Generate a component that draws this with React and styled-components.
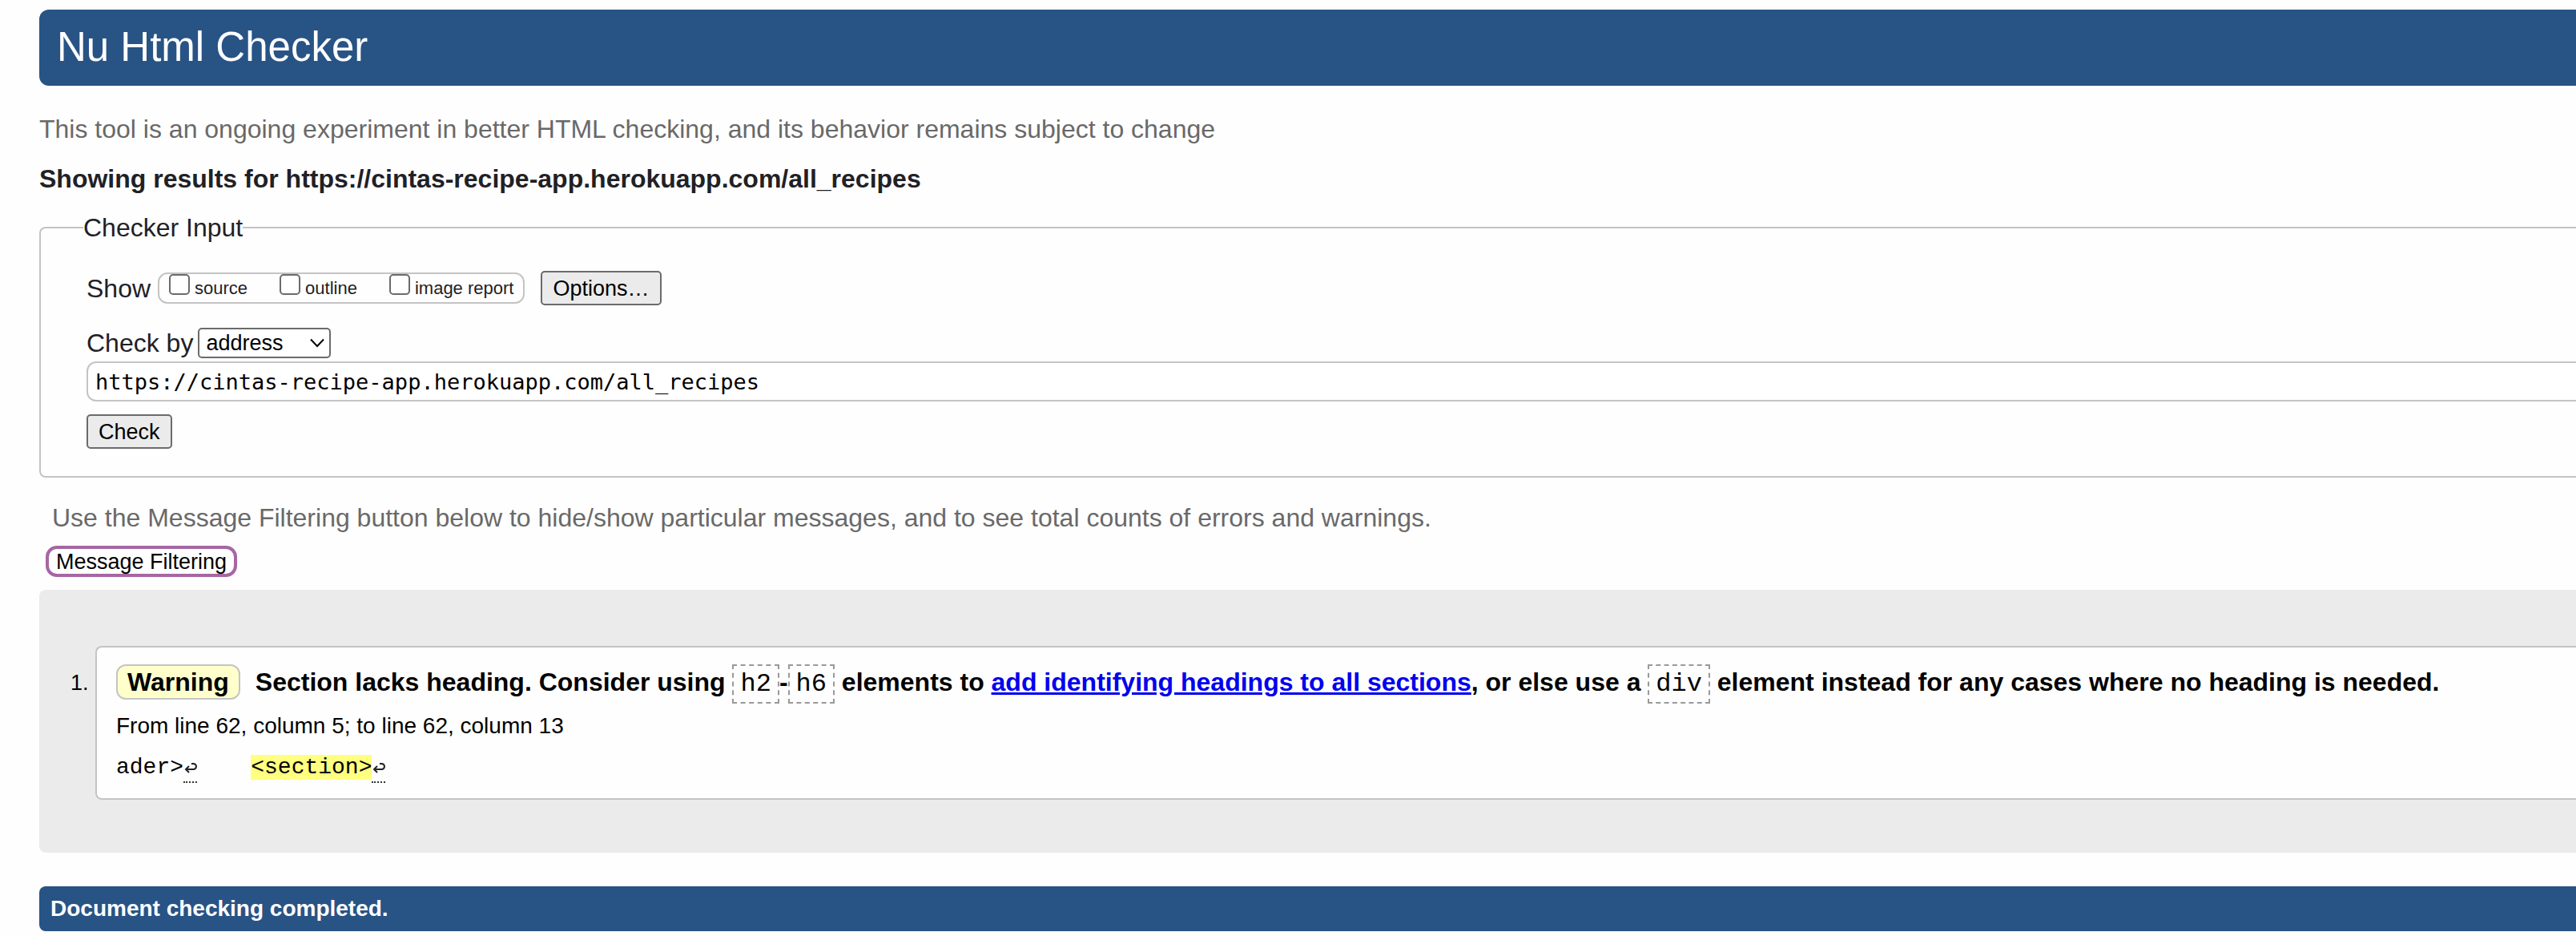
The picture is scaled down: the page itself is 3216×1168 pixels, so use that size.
import React from "react";
import styled, { createGlobalStyle } from "styled-components";

const sans = `"Liberation Sans", Arial, sans-serif`;
const mono = `"Liberation Mono", "Courier New", monospace`;
const grey = "#c4c4c4";
const navy = "#285385";

const GlobalStyle = createGlobalStyle`
  *, *::before, *::after { box-sizing: border-box; }
  body {
    margin: 0;
    background: #fefefe;
    color: #1f2126;
    font: 32px/36px ${sans};
  }
`;

const Page = styled.div`
  padding: 12px 0 6px 49px;
`;

const Banner = styled.h1`
  margin: 0;
  padding: 17px 22px 18px;
  border-radius: 12px 0 0 12px;
  background: ${navy};
  color: #fff;
  font-size: 51px;
  line-height: 60px;
  font-weight: 400;
`;

const Note = styled.p`
  margin: 0;
  padding: ${(p) => (p.$inset ? "32px 16px 0" : "36px 0 0")};
  color: #696969;
`;

const Results = styled.h2`
  margin: 26px 0 0;
  font-size: 32px;
`;

const Panel = styled.fieldset`
  margin: 25px 0 0;
  padding: 36px 0 34px 57px;
  border: 2px solid ${grey};
  border-right: 0;
  border-radius: 8px 0 0 8px;
`;

const Legend = styled.legend`
  margin-left: -4px;
  padding: 0;
`;

const Row = styled.div`
  display: flex;
  align-items: center;
  margin-bottom: ${(p) => p.$gap}px;
`;

const Options = styled.div`
  display: flex;
  gap: 40px;
  height: 39px;
  margin: 0 20px 0 9px;
  padding: 0 12px;
  border: 2px solid ${grey};
  border-radius: 12px;
`;

const Option = styled.label`
  display: flex;
  gap: 6px;
  font-size: 22px;
  line-height: 36px;
`;

const Tick = styled.input`
  appearance: none;
  width: 26px;
  height: 26px;
  margin: 0;
  border: 2px solid #6b6b6b;
  border-radius: 5px;
  background: #fff;
`;

const Button = styled.button`
  height: 43px;
  padding: 0 13px;
  border: 2px solid #6b6b6b;
  border-radius: 5px;
  background: #ebebeb;
  color: #000;
  font: 27px/34px ${sans};
`;

const SelectBox = styled.span`
  display: grid;
  align-items: center;
  width: 166px;
  height: 38px;
  margin-left: 6px;
  > * { grid-area: 1 / 1; }
  > svg { justify-self: end; margin-right: 8px; pointer-events: none; }
`;

const Select = styled.select`
  appearance: none;
  width: 100%;
  height: 100%;
  padding: 0 8px;
  border: 2px solid #6b6b6b;
  border-radius: 5px;
  background: #fff;
  color: #000;
  font: 27px/32px ${sans};
`;

const Address = styled.input`
  display: block;
  width: 100%;
  height: 50px;
  margin-bottom: 16px;
  padding: 0 9px;
  border: 2px solid ${grey};
  border-right: 0;
  border-radius: 12px 0 0 12px;
  background: #fff;
  color: #000;
  font: 27px/36px "DejaVu Sans Mono", monospace;
`;

const FilterButton = styled.button`
  display: block;
  height: 39px;
  margin: 17px 0 0 8px;
  padding: 0 9px;
  border: 4px solid #a666a3;
  border-radius: 14px;
  background: #fff;
  color: #000;
  font: 27px/30px ${sans};
`;

const Messages = styled.ol`
  margin: 16px 0 0;
  padding: 70px 0 66px 70px;
  border-radius: 8px 0 0 8px;
  background: #ebebeb;
  color: #000;
  list-style: none;
  counter-reset: message;
`;

const Message = styled.li`
  counter-increment: message;
  display: flex;
  margin-left: -31px;
  &::before {
    content: counter(message) ".";
    flex: none;
    width: 31px;
    padding-top: 28px;
    font-size: 27px;
  }
`;

const Card = styled.div`
  flex: 1;
  padding: 18px 24px 19px;
  border: 2px solid ${grey};
  border-right: 0;
  border-radius: 8px 0 0 8px;
  background: #fefefe;
`;

const Summary = styled.p`
  margin: 0;
  line-height: 50px;
  font-weight: 700;
`;

const Badge = styled.strong`
  display: inline-block;
  margin-right: 19px;
  padding: 0 12px;
  border: 2px solid ${grey};
  border-radius: 12px;
  background: #ffffcc;
  line-height: 40px;
`;

const Code = styled.code`
  padding: 4px 8px;
  border: 2px dashed #999;
  font: 32px/36px ${mono};
`;

const Link = styled.a`
  color: #0000ee;
`;

const Location = styled.p`
  margin: 12px 0 0;
  font-size: 28px;
  line-height: 36px;
`;

const Extract = styled.p`
  margin: 18px 0 0;
  font: 28px/32px ${mono};
  white-space: pre;
`;

const Mark = styled.mark`
  background: #ffff80;
  color: inherit;
`;

const LineEnd = styled.abbr`
  display: inline-block;
  width: 17px;
  height: 35px;
  vertical-align: top;
  border-bottom: 2px dotted #333;
  text-decoration: none;
  > svg { display: block; margin-top: 9px; }
`;

const Done = styled.p`
  margin: 42px 0 0;
  padding: 10px 14px;
  border-radius: 8px 0 0 8px;
  background: ${navy};
  color: #fff;
  font-size: 28px;
  font-weight: 700;
`;

const Return = () => (
  <LineEnd title="Line break">
    <svg width="17" height="15" viewBox="0 0 17 15" fill="none" stroke="#222" strokeWidth="2">
      <path d="M10 2h2.500a3 3 0 0 1 0 7H3M7 5L3 9l4 4" />
    </svg>
  </LineEnd>
);

export default function App() {
  return (
    <>
      <GlobalStyle />
      <Page>
        <Banner>Nu Html Checker</Banner>
        <Note>This tool is an ongoing experiment in better HTML checking, and its behavior remains subject to change</Note>
        <Results>Showing results for https://cintas-recipe-app.herokuapp.com/all_recipes</Results>
        <Panel>
          <Legend>Checker Input</Legend>
          <Row $gap={28}>
            Show
            <Options>
              {["source", "outline", "image report"].map((name) => (
                <Option key={name}>
                  <Tick type="checkbox" />
                  {name}
                </Option>
              ))}
            </Options>
            <Button type="button">Options…</Button>
          </Row>
          <Row $gap={4}>
            <label htmlFor="method">Check by</label>
            <SelectBox>
              <Select id="method" defaultValue="address">
                <option>address</option>
                <option>file upload</option>
                <option>text input</option>
              </Select>
              <svg width="18" height="12" viewBox="0 0 18 12" fill="none" stroke="#000" strokeWidth="2">
                <path d="M1 1.500l8 8.500 8-8.500" />
              </svg>
            </SelectBox>
          </Row>
          <Address aria-label="Address" type="url" defaultValue="https://cintas-recipe-app.herokuapp.com/all_recipes" />
          <Button type="submit">Check</Button>
        </Panel>
        <Note $inset>
          Use the Message Filtering button below to hide/show particular messages, and to see total counts of errors and
          warnings.
        </Note>
        <FilterButton type="button">Message Filtering</FilterButton>
        <Messages>
          <Message>
            <Card>
              <Summary>
                <Badge>Warning</Badge>
                Section lacks heading. Consider using <Code>h2</Code>-<Code>h6</Code> elements to{" "}
                <Link href="#headings">add identifying headings to all sections</Link>, or else use a <Code>div</Code>{" "}
                element instead for any cases where no heading is needed.
              </Summary>
              <Location>From line 62, column 5; to line 62, column 13</Location>
              <Extract>
                ader&gt;
                <Return />
                {"    "}
                <Mark>&lt;section&gt;</Mark>
                <Return />
              </Extract>
            </Card>
          </Message>
        </Messages>
        <Done>Document checking completed.</Done>
      </Page>
    </>
  );
}
